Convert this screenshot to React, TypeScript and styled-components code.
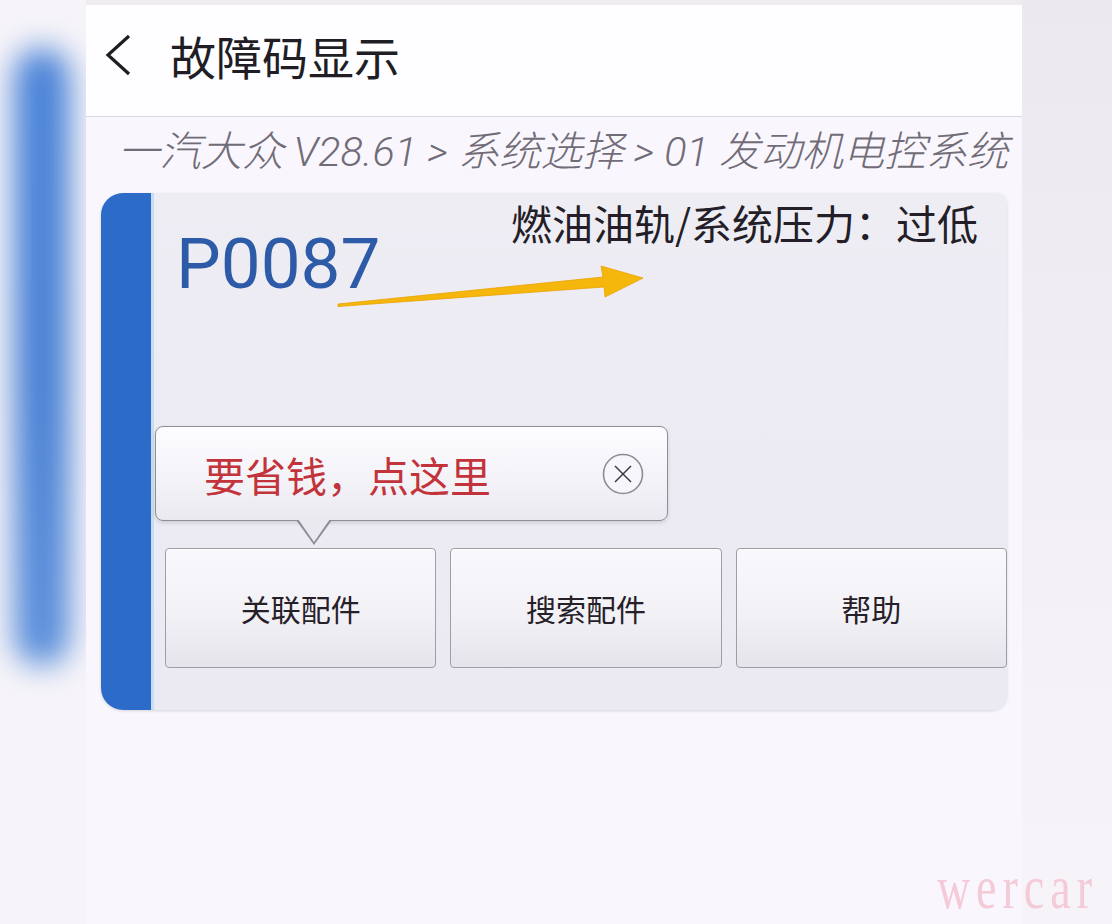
import React from "react";
import styled, { createGlobalStyle } from "styled-components";

const GlobalStyle = createGlobalStyle`
  html, body {
    margin: 0;
    padding: 0;
  }
  body {
    width: 1112px;
    height: 924px;
    overflow: hidden;
    background: #f7f5fa;
    font-family: "Noto Sans CJK SC", "Noto Sans", sans-serif;
  }
`;

const Page = styled.div`
  position: relative;
  display: flex;
  width: 1112px;
  height: 924px;
  overflow: hidden;
  background: #f7f5fa;
`;

const LeftGutter = styled.aside`
  flex: 0 0 86px;
  box-sizing: border-box;
  padding: 48px 0 0 14px;
  background: #f6f4f9;
  overflow: hidden;
`;

const BlurBar = styled.div`
  width: 56px;
  height: 618px;
  border-radius: 28px;
  background: linear-gradient(180deg, #4a83d7 0%, #4a82d4 55%, #5d90db 100%);
  filter: blur(15px);
`;

const RightGutter = styled.aside`
  flex: 0 0 90px;
  background: linear-gradient(180deg, #ebe9ef 0%, #f0eef4 40%, #f5f3f8 80%, #f6f4f9 100%);
`;

const Main = styled.main`
  flex: 0 0 936px;
  display: flex;
  flex-direction: column;
  background: #f9f7fd;
  border-top: 5px solid #eeecf1;
`;

const Header = styled.header`
  height: 112px;
  box-sizing: border-box;
  display: flex;
  align-items: center;
  gap: 38px;
  padding: 0 0 11px 18px;
  background: #fefdff;
  border-bottom: 1px solid #d9d7dd;
`;

const BackIcon = styled.svg`
  width: 28px;
  height: 44px;
  flex: none;
`;

const Title = styled.h1`
  margin: 0;
  font-size: 46px;
  line-height: 46px;
  font-weight: 400;
  color: #201d24;
`;

const Breadcrumb = styled.div`
  padding: 11px 0 16px 32px;
  font-family: Roboto, "Noto Sans CJK SC", sans-serif;
  font-size: 41.4px;
  line-height: 49px;
  font-style: italic;
  font-weight: 300;
  color: #716c77;
  white-space: nowrap;
`;

const Card = styled.section`
  position: relative;
  margin: 0 15px;
  height: 517px;
  display: flex;
  border-radius: 22px 10px 16px 22px;
  background: linear-gradient(180deg, #efedf4 0%, #ebe9f1 100%);
  box-shadow: 0 1px 3px rgba(60, 50, 80, 0.18);
  overflow: hidden;
`;

const Accent = styled.div`
  flex: 0 0 50px;
  background: #2d6bc8;
  border-right: 3px solid #c5ddf6;
`;

const CardBody = styled.div`
  flex: 1;
  display: flex;
  flex-direction: column;
  justify-content: space-between;
  padding: 1px 0 42px 11px;
`;

const TopRow = styled.div`
  display: flex;
  justify-content: space-between;
  align-items: flex-start;
`;

const Code = styled.div`
  margin: 34px 0 0 11px;
  font-family: Roboto, "Noto Sans", sans-serif;
  font-size: 71px;
  line-height: 71px;
  color: #2e5ba7;
`;

const Desc = styled.div`
  margin-right: 29px;
  padding-left: 8px;
  font-size: 41px;
  line-height: 56px;
  color: #231e27;
  white-space: nowrap;
`;

const Actions = styled.div`
  position: relative;
  display: grid;
  grid-template-columns: repeat(3, 1fr);
  gap: 14px;
`;

const ActionButton = styled.button`
  height: 120px;
  padding: 0;
  border: 1.5px solid #9f9da5;
  border-radius: 4px;
  background: linear-gradient(180deg, #f9f8fd 0%, #f2f1f6 55%, #e6e4eb 100%);
  box-shadow: inset 0 1px 0 #ffffff;
  font-family: "Noto Sans CJK SC", sans-serif;
  font-size: 30px;
  color: #262029;
`;

const Tip = styled.div`
  position: absolute;
  left: -10px;
  bottom: calc(100% + 27px);
  width: 513px;
  height: 95px;
  box-sizing: border-box;
  display: flex;
  align-items: center;
  justify-content: space-between;
  padding: 0 23px 0 48px;
  border: 1.5px solid #8f8d95;
  border-radius: 8px;
  background: linear-gradient(180deg, #fdfcff 0%, #f3f2f7 60%, #ebe9f0 100%);
  box-shadow: 0 2px 4px rgba(0, 0, 0, 0.12);

  &::before {
    content: "";
    position: absolute;
    left: 140px;
    top: 100%;
    border-left: 18px solid transparent;
    border-right: 18px solid transparent;
    border-top: 25px solid #8f8d95;
  }
  &::after {
    content: "";
    position: absolute;
    left: 142px;
    top: calc(100% - 1px);
    border-left: 16px solid transparent;
    border-right: 16px solid transparent;
    border-top: 23px solid #ebe9f0;
  }
`;

const TipText = styled.span`
  font-size: 41px;
  line-height: 48px;
  color: #c2333b;
`;

const CloseIcon = styled.svg`
  width: 42px;
  height: 42px;
  flex: none;
`;

const ArrowOverlay = styled.svg`
  position: absolute;
  left: 0;
  top: 0;
  width: 906px;
  height: 517px;
  pointer-events: none;
`;

const Watermark = styled.div`
  position: absolute;
  right: 14px;
  bottom: 5px;
  font-family: "Liberation Serif", serif;
  font-size: 46px;
  line-height: 1;
  letter-spacing: 6px;
  color: #f4cad7;
  transform: scaleY(1.35);
  transform-origin: bottom right;
`;

const buttons = ["关联配件", "搜索配件", "帮助"];

export default function App() {
  return (
    <>
      <GlobalStyle />
      <Page>
        <LeftGutter>
          <BlurBar />
        </LeftGutter>
        <Main>
          <Header>
            <BackIcon viewBox="0 0 28 44">
              <polyline
                points="25,3 4,22 25,41"
                fill="none"
                stroke="#1f1c22"
                strokeWidth="3.2"
                strokeLinejoin="miter"
              />
            </BackIcon>
            <Title>故障码显示</Title>
          </Header>
          <Breadcrumb>一汽大众 V28.61 &gt; 系统选择 &gt; 01 发动机电控系统</Breadcrumb>
          <Card>
            <Accent />
            <CardBody>
              <TopRow>
                <Code>P0087</Code>
                <Desc>燃油油轨/系统压力：过低</Desc>
              </TopRow>
              <Actions>
                <Tip>
                  <TipText>要省钱，点这里</TipText>
                  <CloseIcon viewBox="0 0 42 42">
                    <circle cx="21" cy="21" r="19.5" fill="#f7f6fa" stroke="#8e8c93" strokeWidth="1.6" />
                    <line x1="13" y1="13" x2="29" y2="29" stroke="#3a3540" strokeWidth="1.5" />
                    <line x1="29" y1="13" x2="13" y2="29" stroke="#3a3540" strokeWidth="1.5" />
                  </CloseIcon>
                </Tip>
                {buttons.map((b) => (
                  <ActionButton key={b}>{b}</ActionButton>
                ))}
              </Actions>
            </CardBody>
            <ArrowOverlay viewBox="0 0 906 517">
              <polygon
                points="237,111 502,84 500,73 542,85 504,104 503,94 237,113.5"
                fill="#f5b70b"
                stroke="#eaa200"
                strokeWidth="0.8"
                strokeLinejoin="round"
              />
            </ArrowOverlay>
          </Card>
        </Main>
        <RightGutter />
        <Watermark>wercar</Watermark>
      </Page>
    </>
  );
}
